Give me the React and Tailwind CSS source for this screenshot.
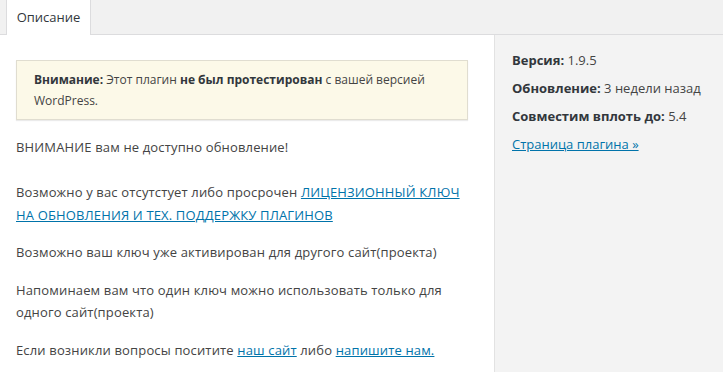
import React from "react";

const linkCls = "text-[#0073aa] underline";

const App = () => {
  return (
    <div
      className="w-[723px] h-[372px] overflow-hidden bg-white text-[13px] text-[#444]"
      style={{ fontFamily: '"Open Sans", "Noto Sans", sans-serif' }}
    >
      {/* tabs bar */}
      <div className="h-[35px] bg-[#f1f1f1] border-b border-[#dcdcde] flex items-end pl-[6px]">
        <div className="h-[35px] w-[85px] -mb-px bg-white border-x border-[#dcdcde] flex items-center justify-center text-[#32373c] text-[13px]">
          Описание
        </div>
      </div>

      <div className="flex h-[337px]">
        {/* main */}
        <div className="w-[494px] pl-[16px] pr-[26px] pt-[25px] leading-[22.5px] tracking-[0.15px]">
          <div className="bg-[#fcf9e8] border border-[#e0ddd0] shadow-[0_1px_1px_rgba(0,0,0,0.08)] px-[17px] py-[8px] leading-[21px] text-[12px] tracking-normal">
            <strong className="font-bold text-[#32373c]">Внимание:</strong> Этот плагин{" "}
            <strong className="font-bold text-[#32373c]">не был протестирован</strong> с вашей версией WordPress.
          </div>

          <p className="mt-[16px]">
            ВНИМАНИЕ вам не доступно обновление!
            <br />
            <br />
            Возможно у вас отсутстует либо просрочен{" "}
            <a href="#" className={linkCls}>
              ЛИЦЕНЗИОННЫЙ КЛЮЧ НА ОБНОВЛЕНИЯ И ТЕХ. ПОДДЕРЖКУ ПЛАГИНОВ
            </a>
          </p>
          <p className="mt-[15px]">Возможно ваш ключ уже активирован для другого сайт(проекта)</p>
          <p className="mt-[15px]">Напоминаем вам что один ключ можно использовать только для одного сайт(проекта)</p>
          <p className="mt-[15px]">
            Если возникли вопросы поситите{" "}
            <a href="#" className={linkCls}>
              наш сайт
            </a>{" "}
            либо{" "}
            <a href="#" className={linkCls}>
              напишите нам.
            </a>
          </p>
        </div>

        {/* sidebar */}
        <div className="flex-1 bg-[#f3f3f3] border-l border-[#e2e2e2] pl-[17px] pt-[15px] flex flex-col gap-[8px] leading-[20px]">
          <div>
            <strong className="font-bold text-[#32373c]">Версия:</strong> 1.9.5
          </div>
          <div>
            <strong className="font-bold text-[#32373c]">Обновление:</strong> 3 недели назад
          </div>
          <div>
            <strong className="font-bold text-[#32373c]">Совместим вплоть до:</strong> 5.4
          </div>
          <div>
            <a href="#" className={linkCls}>
              Страница плагина »
            </a>
          </div>
        </div>
      </div>
    </div>
  );
};

export default App;
